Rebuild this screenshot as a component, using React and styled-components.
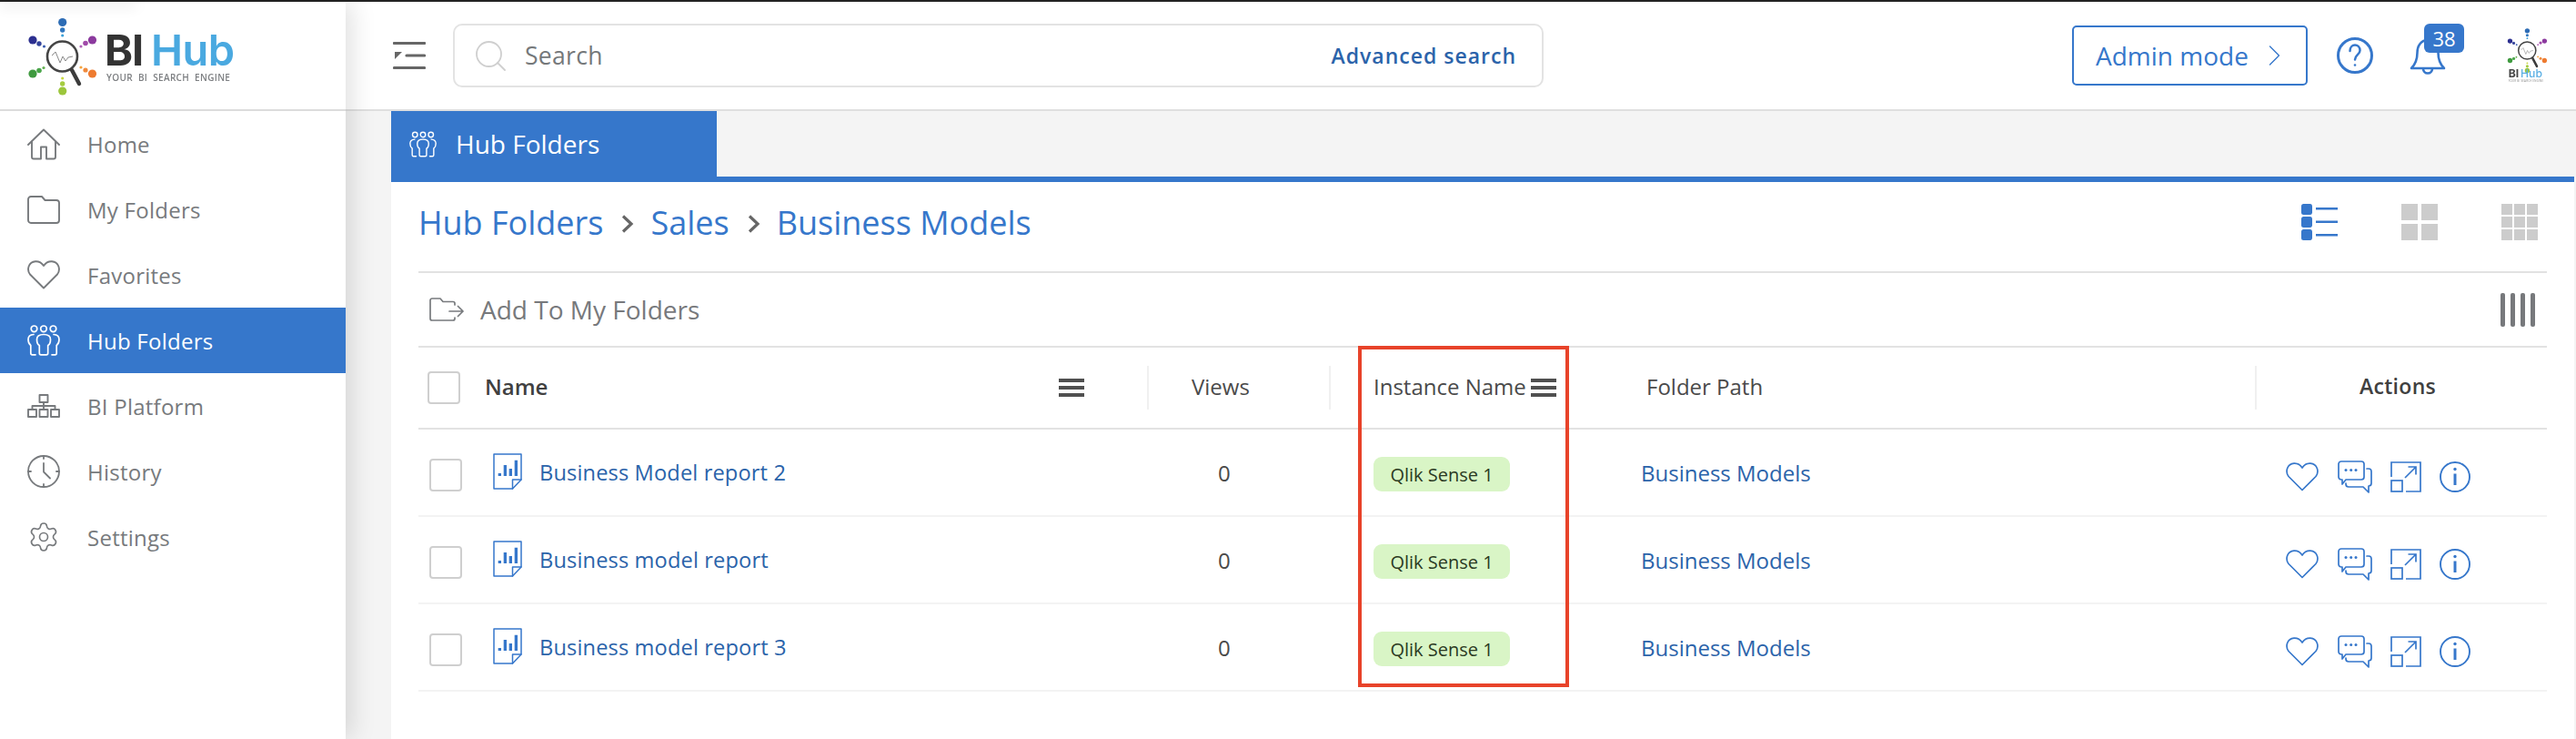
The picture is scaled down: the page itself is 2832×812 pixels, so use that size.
import React from 'react';
import styled, { createGlobalStyle } from 'styled-components';
import { Settings } from 'lucide-react';

const BLUE = '#3677cb';
const LINK = '#2b63aa';

const Global = createGlobalStyle`
  html, body { margin: 0; padding: 0; background: #fff; }
  body { font-family: "Open Sans", "Liberation Sans", sans-serif; }
  * { box-sizing: border-box; }
`;

const Page = styled.div`
  position: relative; width: 2832px; height: 812px; overflow: hidden;
  display: flex; flex-direction: column; background: #fff;
`;
const TopStrip = styled.div`height: 2px; background: #232323; flex: none;`;
const TopShadow = styled.div`
  position: absolute; left: 0; top: 0; width: 150px; height: 2px; z-index: 3;
  box-shadow: 0 4px 14px rgba(0,0,0,.28);
`;
const Body = styled.div`flex: 1; display: flex; min-height: 0;`;

const Sidebar = styled.aside`
  width: 380px; flex: none; background: #fff; position: relative; z-index: 2;
  box-shadow: 6px 0 26px rgba(0,0,0,.13);
`;
const LogoArea = styled.div`
  height: 120px; border-bottom: 2px solid #dcdcdc; padding: 16px 0 0 30px;
`;
const LogoSvg = styled.svg`display: block; filter: blur(.45px);`;
const SmallLogoSvg = styled.svg`display: block; filter: blur(.7px); margin-left: 67px;`;
const NavItem = styled.div`
  height: 72px; display: flex; align-items: center; gap: 30px; padding-left: 30px;
  font-size: 24px; letter-spacing: .25px;
  background: ${p => (p.$active ? BLUE : '#fff')};
  color: ${p => (p.$active ? '#fff' : '#777a7d')};
`;
const Glyph = styled.svg`
  display: block; flex: none; fill: none; stroke: ${p => p.$c || 'currentColor'};
  stroke-width: ${p => p.$sw || 2}; stroke-linecap: round; stroke-linejoin: round;
`;

const Main = styled.main`flex: 1; min-width: 0; display: flex; flex-direction: column; background: #f4f4f4;`;
const Header = styled.header`
  height: 120px; flex: none; background: #fff; border-bottom: 2px solid #dfdfdf;
  display: flex; align-items: center; padding: 0 32px 0 52px;
`;
const SearchBox = styled.div`
  width: 1199px; height: 70px; margin-left: 30px; border: 2px solid #e3e3e3; border-radius: 10px;
  display: flex; align-items: center; padding: 0 28px 0 23px; font-size: 26.5px; color: #75787a;
`;
const SearchLabel = styled.span`margin-left: 21px; flex: 1; letter-spacing: .3px;`;
const Advanced = styled.span`font-size: 23px; font-weight: 600; color: ${LINK}; letter-spacing: 1px;`;
const HeaderRight = styled.div`margin-left: auto; display: flex; align-items: center;`;
const AdminBtn = styled.div`
  width: 259px; height: 66px; border: 2.5px solid ${BLUE}; border-radius: 5px; color: ${BLUE};
  display: flex; align-items: center; padding-left: 24px; gap: 22px; font-size: 28px;
`;
const Help = styled.div`margin-left: 32px;`;
const BellWrap = styled.div`position: relative; margin-left: 40px; margin-top: 2px;`;
const Badge = styled.div`
  position: absolute; left: 16px; top: -16px; width: 44px; height: 32px; border-radius: 6px;
  background: ${BLUE}; color: #fff; font-size: 22px;
  display: flex; align-items: center; justify-content: center;
`;

const TabBar = styled.div`
  margin-left: 50px; margin-right: 2px; height: 78px; flex: none;
  border-bottom: 6px solid ${BLUE}; display: flex;
`;
const Tab = styled.div`
  width: 358px; background: ${BLUE}; color: #fff; display: flex; align-items: center;
  gap: 21px; padding-left: 20px; font-size: 28px;
`;
const Card = styled.section`
  flex: 1; margin-left: 50px; margin-right: 2px; background: #fff; padding: 0 30px;
`;
const CrumbRow = styled.div`
  height: 100px; border-bottom: 2px solid #e2e2e2; display: flex; align-items: center;
  padding: 0 10px 10px 0; font-size: 36px; color: ${BLUE};
`;
const CrumbLink = styled.span``;
const CrumbSep = styled.span`display: flex; margin: 4px 18px 0 20px;`;
const ViewIcons = styled.div`margin-left: auto; display: flex; gap: 70px;`;
const ToolRow = styled.div`
  height: 80px; display: flex; align-items: center; padding: 0 13px 0 12px;
  font-size: 28px; color: #77797c; gap: 18px;
`;
const ToolEnd = styled.div`margin-left: auto;`;

const Table = styled.div`position: relative; border-top: 2px solid #e2e2e2;`;
const RedBox = styled.div`
  position: absolute; left: 1033px; top: -2px; width: 232px; height: 375px;
  border: 4px solid #e8432a; pointer-events: none;
`;
const Columns = `display: grid; grid-template-columns: 801px 200px 319px 699px 321px;`;
const HeadRow = styled.div`
  ${Columns} height: 90px; border-bottom: 2px solid #e2e2e2; font-size: 24px; color: #4a4a4a;
`;
const DataRow = styled.div`
  ${Columns} height: 96px; border-bottom: 2px solid #f3f3f3; font-size: 24px; color: #4a4a4a;
`;
const HCell = styled.div`display: flex; align-items: center; padding-left: ${p => p.$pl || 0}px;`;
const Cell = styled.div`display: flex; align-items: center; padding-left: ${p => p.$pl || 0}px;`;
const Divider = styled.div`width: 2px; height: 48px; background: #f0f0f0; margin-right: ${p => p.$mr}px; flex: none;`;
const HeadLabel = styled.span`margin-bottom: 4px;`;
const Bold = styled.span`font-weight: 600; color: #404040; font-size: 24px; margin-bottom: 4px;`;
const ActionsLabel = styled(Bold)`font-size: 23px; letter-spacing: .3px;`;
const Menu = styled.div`
  width: 28px; height: 20px; flex: none; margin-left: ${p => p.$ml || '5px'}; margin-right: ${p => p.$mr || 0};
  display: flex; flex-direction: column; justify-content: space-between;
`;
const MenuBar = styled.div`height: 4px; background: #505050;`;
const Check = styled.div`
  width: 36px; height: 36px; flex: none; border: 2px solid #cfcfcf; border-radius: 4px; background: #fff;
  margin-top: ${p => p.$mt || 0}px;
`;
const NameHead = styled(Bold)`margin-left: 27px; flex: 1;`;
const ReportSlot = styled.div`margin-left: 34px; margin-top: -2px;`;
const ReportLink = styled.span`color: ${LINK}; letter-spacing: .15px; margin-left: 19px; font-size: 23.6px;`;
const PathLink = styled.span`color: ${LINK}; font-size: 24px;`;
const Chip = styled.span`
  height: 38px; width: 150px; border-radius: 9px; background: #d9f5c6; color: #2b3a22; margin-top: 4px;
  display: flex; align-items: center; justify-content: center; font-size: 20px;
`;
const ActionSet = styled.div`display: flex; align-items: center; color: ${BLUE}; margin-top: 10px;`;
const ActionSlot = styled.div`margin-left: ${p => p.$ml || 0}px;`;

const dots = [
  [68.7,24.5,4.6,'#2d6cb5'],[68.7,33,2.7,'#3178c0'],[68.7,39,1.6,'#3ba0d8'],
  [36,44,4.6,'#2c2f8f'],[43,48,2.7,'#33439b'],[48.5,51,1.6,'#3b5cb0'],
  [101.5,44,4.6,'#8c3a9e'],[94,47.5,2.8,'#a04aa8'],[89,51,1.6,'#b060b8'],
  [36,81,4.6,'#3f9a3f'],[43,77.5,2.8,'#4aa64a'],[48,74.5,1.6,'#62b04f'],
  [101.5,81,4.6,'#ee7b30'],[94,77,2.6,'#f08a3c'],[89,74,1.6,'#f5a33c'],
  [68.7,100,4.6,'#9cc63c'],[68.7,92,2.7,'#a5cc40'],[68.7,86,1.6,'#c8d840'],
];
const LogoMark = () => (
  <g>
    {dots.map((d, i) => <circle key={i} cx={d[0]} cy={d[1]} r={d[2]} fill={d[3]} />)}
    <circle cx="68.5" cy="62" r="16.5" fill="#fff" stroke="#444" strokeWidth="2.6" />
    <path d="M79 77 L87 92" stroke="#3c3c3c" strokeWidth="4.4" strokeLinecap="round" />
    <polyline points="57,61 61,57 66,69 69,62 72,67 75,63 80,62" fill="none" stroke="#888" strokeWidth="1" />
  </g>
);
const Logo = () => (
  <LogoSvg width="240" height="96" viewBox="30 18 240 96">
    <LogoMark />
    <text x="115" y="72" fontFamily="Inter, sans-serif" fontWeight="700" fontSize="47" fill="#333" letterSpacing="-1">BI</text>
    <text x="166" y="72" fontFamily="Inter, sans-serif" fontWeight="600" fontSize="47" fill="#4aa9e0" letterSpacing="-.5">Hub</text>
    <text x="117" y="89" fontFamily="Open Sans, sans-serif" fontWeight="600" fontSize="10" fill="#7d7f82" letterSpacing=".35" xmlSpace="preserve">YOUR  BI  SEARCH  ENGINE</text>
  </LogoSvg>
);
const SmallLogo = () => (
  <SmallLogoSvg width="44" height="62" viewBox="30 18 76 107">
    <LogoMark />
    <text x="33" y="113" fontFamily="Inter, sans-serif" fontWeight="700" fontSize="21" fill="#444">BI</text>
    <text x="56" y="113" fontFamily="Inter, sans-serif" fontWeight="500" fontSize="21" fill="#5cb0e4">Hub</text>
    <text x="33" y="122" fontFamily="Open Sans, sans-serif" fontSize="5" fill="#888" letterSpacing=".4">YOUR BI SEARCH ENGINE</text>
  </SmallLogoSvg>
);

const PeopleIcon = ({ w = 36, h = 34 }) => (
  <Glyph width={w} height={h} viewBox="0 0 36 34" $sw={1.7}>
    <circle cx="7.5" cy="4.3" r="3.3" /><circle cx="18" cy="4.3" r="3.3" /><circle cx="28.5" cy="4.3" r="3.3" />
    <path d="M18 10.5c-5 0-7.5 2-7.5 5.5 0 3 .8 5.5 2.8 6.5v8.5c0 1 .7 1.8 1.7 1.8h6c1 0 1.7-.8 1.7-1.8v-8.5c2-1 2.8-3.5 2.8-6.5 0-3.500-2.500-5.500-7.500-5.500z" />
    <path d="M7 10.500c-4 .3-6 2.300-6 5.500 0 3 .8 5 2.800 6.500v8.500c0 1 .7 1.800 1.700 1.800H9" />
    <path d="M29 10.500c4 .3 6 2.300 6 5.500 0 3-.8 5-2.800 6.500v8.500c0 1-.7 1.800-1.700 1.800H27" />
  </Glyph>
);
const HomeIcon = () => (
  <Glyph width="36" height="35" viewBox="0 0 36 35" $sw={1.9}>
    <path d="M1 18 L18 1.500 L35 18" /><path d="M5 14.500V31.500a2 2 0 0 0 2 2h8V20.500h6V33.500h8a2 2 0 0 0 2-2V14.500" />
  </Glyph>
);
const FolderIcon = () => (
  <Glyph width="36" height="31" viewBox="0 0 36 31" $sw={1.9}>
    <path d="M1 4a3 3 0 0 1 3-3h12l3.500 4H32a3 3 0 0 1 3 3v19a3 3 0 0 1-3 3H4a3 3 0 0 1-3-3z" />
  </Glyph>
);
const HeartPath = 'M18 30.500L3 15.500C-1 10 1.500 1.800 9 1.200c4-.2 7 1.800 9 4.800 2-3 5-5 9-4.800 7.500.6 10 8.800 6 14.300z';
const HeartIcon = ({ sw = 1.9 }) => (
  <Glyph width="36" height="32" viewBox="0 0 36 32" $sw={sw}><path d={HeartPath} /></Glyph>
);
const OrgIcon = () => (
  <Glyph width="36" height="26" viewBox="0 0 36 26" $sw={1.9} style={{ strokeLinecap: 'butt' }}>
    <rect x="13.500" y="1" width="9" height="8" /><rect x="1" y="17" width="9" height="8" />
    <rect x="13.500" y="17" width="9" height="8" /><rect x="26" y="17" width="9" height="8" />
    <path d="M18 9v8M5.500 17v-4h25v4" />
  </Glyph>
);
const ClockIcon = () => (
  <Glyph width="36" height="36" viewBox="0 0 36 36" $sw={1.8}>
    <circle cx="18" cy="18" r="17" /><path d="M18 9v9.500l7 7M18 1v3M18 32v3M1 18h3M32 18h3" />
  </Glyph>
);

const Hamburger = () => (
  <Glyph width="36" height="30" viewBox="0 0 36 30" $c="#666" $sw={3.200}>
    <path d="M1.500 1.500h33M15 15h19.500M1.500 28.500h33" />
    <path d="M2 11h8l-8 8z" fill="#666" stroke="none" />
  </Glyph>
);
const SearchIcon = () => (
  <Glyph width="33" height="33" viewBox="0 0 33 33" $c="#cfcfcf" $sw={1.800}>
    <circle cx="14.500" cy="14.500" r="13.500" /><path d="M24 24l8 8" />
  </Glyph>
);
const Chevron = () => (
  <Glyph width="13" height="22" viewBox="0 0 13 22" $sw={1.400}><path d="M1.500 1l10 10-10 10" /></Glyph>
);
const HelpIcon = () => (
  <Glyph width="40" height="40" viewBox="0 0 40 40" $c={BLUE} $sw={3}>
    <circle cx="20" cy="20" r="18.500" />
    <path d="M14.500 15c0-4 2.500-6.500 5.500-6.500s5.500 2.500 5.500 6c0 4.500-5.500 5-5.500 10" strokeWidth="2.500" />
    <circle cx="20" cy="30.500" r="1.300" fill={BLUE} stroke="none" />
  </Glyph>
);
const BellIcon = () => (
  <Glyph width="40" height="40" viewBox="0 0 40 40" $c={BLUE} $sw={2.600}>
    <path d="M2 33c5-5 6.500-10 6.500-17C8.500 8 13 2 20 2s11.500 6 11.500 14c0 7 1.500 12 6.500 17z" />
    <path d="M15 33.500a5 5 0 0 0 10 0" />
  </Glyph>
);
const CrumbChevron = () => (
  <Glyph width="14" height="22" viewBox="0 0 14 22" $c="#666" $sw={3.200} style={{ strokeLinecap: 'butt', strokeLinejoin: 'miter' }}>
    <path d="M2 2.500l9 8.500-9 8.500" />
  </Glyph>
);
const ListView = () => (
  <svg width="40" height="40" viewBox="0 0 40 40" style={{ display: 'block' }} fill={BLUE}>
    <rect x="0" y="0" width="12" height="12" rx="2.500" /><rect x="0" y="14" width="12" height="12" rx="2.500" /><rect x="0" y="28" width="12" height="12" rx="2.500" />
    <rect x="16" y="4" width="24" height="2.500" /><rect x="16" y="18.500" width="24" height="2.500" /><rect x="16" y="33" width="24" height="2.500" />
  </svg>
);
const Grid2View = () => (
  <svg width="40" height="40" viewBox="0 0 40 40" style={{ display: 'block' }} fill="#cccccc">
    {[0, 22].map(y => [0, 22].map(x => <rect key={`${x}-${y}`} x={x} y={y} width="18" height="18" />))}
  </svg>
);
const Grid3View = () => (
  <svg width="40" height="40" viewBox="0 0 40 40" style={{ display: 'block' }} fill="#cccccc">
    {[0, 14, 28].map(y => [0, 14, 28].map(x => <rect key={`${x}-${y}`} x={x} y={y} width="12" height="12" />))}
  </svg>
);
const AddFolderIcon = () => (
  <Glyph width="38" height="26" viewBox="0 0 38 26" $c="#777a7d" $sw={1.700}>
    <path d="M28 22v1a2 2 0 0 1-2 2H3a2 2 0 0 1-2-2V3a2 2 0 0 1 2-2h9l3 3.500h11a2 2 0 0 1 2 2V8" />
    <path d="M22 15h15M31.500 9.500l5.500 5.500-5.500 5.500" />
  </Glyph>
);
const ColumnsIcon = () => (
  <svg width="38" height="37" viewBox="0 0 38 37" style={{ display: 'block' }} fill="#77797c">
    {[0, 11, 22, 33].map(x => <rect key={x} x={x} y="0" width="5" height="37" rx="2" />)}
  </svg>
);
const ReportIcon = () => (
  <Glyph width="32" height="40" viewBox="0 0 32 40" $c={BLUE} $sw={1.500}>
    <path d="M1 1h30v28L21.500 39H1z" /><path d="M31 29h-9.500v10" />
    <path d="M5.700 22h3.300v3H5.700zM11.700 13h3.300v12h-3.300zM17.700 17h3.300v8h-3.300zM23.700 7.700h3.300V25h-3.300z" fill={BLUE} stroke="none" />
  </Glyph>
);
const ChatIcon = () => (
  <Glyph width="38" height="36" viewBox="0 0 38 36" $c={BLUE} $sw={1.700}>
    <path d="M4 1h22a3 3 0 0 1 3 3v14a3 3 0 0 1-3 3H9l-4 5v-5H4a3 3 0 0 1-3-3V4a3 3 0 0 1 3-3z" />
    <path d="M32 9h2a3 3 0 0 1 3 3v13a3 3 0 0 1-3 3v7l-6-6H12a3 3 0 0 1-3-3v-1" />
    <circle cx="9" cy="10.500" r="1.500" fill={BLUE} stroke="none" /><circle cx="14.700" cy="10.500" r="1.500" fill={BLUE} stroke="none" /><circle cx="20" cy="10.500" r="1.500" fill={BLUE} stroke="none" />
  </Glyph>
);
const ExpandIcon = () => (
  <Glyph width="34" height="34" viewBox="0 0 34 34" $c={BLUE} $sw={1.700} style={{ strokeLinecap: 'butt', strokeLinejoin: 'miter' }}>
    <path d="M1 17V1h32v32H17" /><rect x="1" y="21" width="12" height="12" /><path d="M16 18L28 6M19.500 6H28v8.500" />
  </Glyph>
);
const InfoIcon = () => (
  <Glyph width="34" height="34" viewBox="0 0 34 34" $c={BLUE} $sw={1.900}>
    <circle cx="17" cy="17" r="16" /><circle cx="17" cy="8.500" r="1.700" fill={BLUE} stroke="none" />
    <path d="M17 13.500v12.500" strokeWidth="3" strokeLinecap="butt" />
  </Glyph>
);

const nav = [
  ['Home', <HomeIcon />], ['My Folders', <FolderIcon />], ['Favorites', <HeartIcon />],
  ['Hub Folders', <PeopleIcon />, true], ['BI Platform', <OrgIcon />], ['History', <ClockIcon />],
  ['Settings', <Settings size={36} strokeWidth={1.100} />],
];
const reports = ['Business Model report 2', 'Business model report', 'Business model report 3'];

const MenuIcon = ({ ml, mr }) => (
  <Menu $ml={ml} $mr={mr}><MenuBar /><MenuBar /><MenuBar /></Menu>
);

export default function App() {
  return (
    <Page>
      <Global />
      <TopStrip />
      <TopShadow />
      <Body>
        <Sidebar>
          <LogoArea><Logo /></LogoArea>
          {nav.map(([label, icon, active]) => (
            <NavItem key={label} $active={active}>{icon}{label}</NavItem>
          ))}
        </Sidebar>
        <Main>
          <Header>
            <Hamburger />
            <SearchBox>
              <SearchIcon />
              <SearchLabel>Search</SearchLabel>
              <Advanced>Advanced search</Advanced>
            </SearchBox>
            <HeaderRight>
              <AdminBtn>Admin mode <Chevron /></AdminBtn>
              <Help><HelpIcon /></Help>
              <BellWrap><BellIcon /><Badge>38</Badge></BellWrap>
              <SmallLogo />
            </HeaderRight>
          </Header>
          <TabBar>
            <Tab><PeopleIcon w={30} h={29} />Hub Folders</Tab>
          </TabBar>
          <Card>
            <CrumbRow>
              <CrumbLink>Hub Folders</CrumbLink>
              <CrumbSep><CrumbChevron /></CrumbSep>
              <CrumbLink>Sales</CrumbLink>
              <CrumbSep><CrumbChevron /></CrumbSep>
              <CrumbLink>Business Models</CrumbLink>
              <ViewIcons><ListView /><Grid2View /><Grid3View /></ViewIcons>
            </CrumbRow>
            <ToolRow>
              <AddFolderIcon />
              Add To My Folders
              <ToolEnd><ColumnsIcon /></ToolEnd>
            </ToolRow>
            <Table>
              <RedBox />
              <HeadRow>
                <HCell $pl={10}>
                  <Check />
                  <NameHead>Name</NameHead>
                  <MenuIcon ml="0" mr="69px" />
                </HCell>
                <HCell><Divider $mr={47} /><HeadLabel>Views</HeadLabel></HCell>
                <HCell><Divider $mr={47} /><HeadLabel>Instance Name</HeadLabel><MenuIcon /></HCell>
                <HCell $pl={30}><HeadLabel>Folder Path</HeadLabel></HCell>
                <HCell><Divider $mr={113} /><ActionsLabel>Actions</ActionsLabel></HCell>
              </HeadRow>
              {reports.map(name => (
                <DataRow key={name}>
                  <Cell $pl={12}>
                    <Check $mt={6} />
                    <ReportSlot><ReportIcon /></ReportSlot>
                    <ReportLink>{name}</ReportLink>
                  </Cell>
                  <Cell $pl={78}>0</Cell>
                  <Cell $pl={49}><Chip>Qlik Sense 1</Chip></Cell>
                  <Cell $pl={24}><PathLink>Business Models</PathLink></Cell>
                  <Cell $pl={34}>
                    <ActionSet>
                      <HeartIcon sw={1.700} />
                      <ActionSlot $ml={21}><ChatIcon /></ActionSlot>
                      <ActionSlot $ml={20}><ExpandIcon /></ActionSlot>
                      <ActionSlot $ml={20}><InfoIcon /></ActionSlot>
                    </ActionSet>
                  </Cell>
                </DataRow>
              ))}
            </Table>
          </Card>
        </Main>
      </Body>
    </Page>
  );
}
